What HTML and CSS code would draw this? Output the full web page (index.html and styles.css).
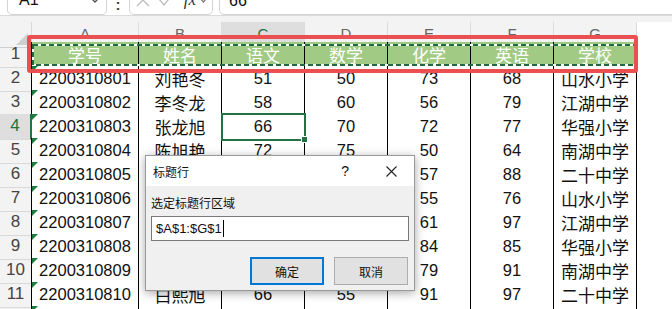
FILE: index.html
```html
<!DOCTYPE html>
<html>
    <head>
        <title>标题行</title>
        <meta charset="utf-8">
        <link rel="stylesheet" href="styles.css">
    </head>
    <body>
        <div class="page">
            <div class="toolbar">
                <div class="namebox">
                    <span>A1</span>
                    <svg width="12" height="8" viewBox="0 0 12 8"><path d="M1 1 L6 6 L11 1" fill="none" stroke="#555" stroke-width="1.4"/></svg>
                </div>
                <div class="colon">:</div>
                <div class="fxbox">
                    <svg width="14" height="14" viewBox="0 0 14 14"><path d="M1 1 L13 13 M13 1 L1 13" stroke="#bbb" stroke-width="1.3"/></svg>
                    <svg width="16" height="14" viewBox="0 0 16 14"><path d="M1 6 L6 12 L15 1" fill="none" stroke="#bbb" stroke-width="1.3"/></svg>
                    <i class="fx">fx</i>
                    <svg width="11" height="8" viewBox="0 0 11 8"><path d="M1 1 L5.5 6 L10 1" fill="none" stroke="#777" stroke-width="1.2"/></svg>
                </div>
                <div class="formula">66</div>
            </div>

            <div class="sheet">
                <div class="row colhead">
                    <div class="corner"><svg width="12" height="12" viewBox="0 0 12 12"><polygon points="12,0 12,12 0,12" fill="#cfcfcf"/></svg></div>
                    <div class="ch">A</div>
                    <div class="ch">B</div>
                    <div class="ch act">C</div>
                    <div class="ch">D</div>
                    <div class="ch">E</div>
                    <div class="ch">F</div>
                    <div class="ch">G</div>
                    <div class="ch blank"></div>
                </div>
                <div class="row r1">
                    <div class="rh">1</div>
                    <div class="cell">学号</div>
                    <div class="cell">姓名</div>
                    <div class="cell">语文</div>
                    <div class="cell">数学</div>
                    <div class="cell">化学</div>
                    <div class="cell">英语</div>
                    <div class="cell">学校</div>
                    <div class="blank"></div>
                </div>
                <div class="row">
                    <div class="rh">2</div>
                    <div class="cell txt">2200310801</div>
                    <div class="cell zh">刘艳冬</div>
                    <div class="cell">51</div>
                    <div class="cell">50</div>
                    <div class="cell">73</div>
                    <div class="cell">68</div>
                    <div class="cell zh">山水小学</div>
                    <div class="blank"></div>
                </div>
                <div class="row">
                    <div class="rh">3</div>
                    <div class="cell txt">2200310802</div>
                    <div class="cell zh">李冬龙</div>
                    <div class="cell">58</div>
                    <div class="cell">60</div>
                    <div class="cell">56</div>
                    <div class="cell">79</div>
                    <div class="cell zh">江湖中学</div>
                    <div class="blank"></div>
                </div>
                <div class="row">
                    <div class="rh act">4</div>
                    <div class="cell txt">2200310803</div>
                    <div class="cell zh">张龙旭</div>
                    <div class="cell sel">66</div>
                    <div class="cell">70</div>
                    <div class="cell">72</div>
                    <div class="cell">77</div>
                    <div class="cell zh">华强小学</div>
                    <div class="blank"></div>
                </div>
                <div class="row">
                    <div class="rh">5</div>
                    <div class="cell txt">2200310804</div>
                    <div class="cell zh">陈旭艳</div>
                    <div class="cell">72</div>
                    <div class="cell">75</div>
                    <div class="cell">50</div>
                    <div class="cell">64</div>
                    <div class="cell zh">南湖中学</div>
                    <div class="blank"></div>
                </div>
                <div class="row">
                    <div class="rh">6</div>
                    <div class="cell txt">2200310805</div>
                    <div class="cell zh">王冬艳</div>
                    <div class="cell">80</div>
                    <div class="cell">66</div>
                    <div class="cell">57</div>
                    <div class="cell">88</div>
                    <div class="cell zh">二十中学</div>
                    <div class="blank"></div>
                </div>
                <div class="row">
                    <div class="rh">7</div>
                    <div class="cell txt">2200310806</div>
                    <div class="cell zh">赵龙冬</div>
                    <div class="cell">63</div>
                    <div class="cell">71</div>
                    <div class="cell">55</div>
                    <div class="cell">76</div>
                    <div class="cell zh">山水小学</div>
                    <div class="blank"></div>
                </div>
                <div class="row">
                    <div class="rh">8</div>
                    <div class="cell txt">2200310807</div>
                    <div class="cell zh">孙旭龙</div>
                    <div class="cell">77</div>
                    <div class="cell">82</div>
                    <div class="cell">61</div>
                    <div class="cell">97</div>
                    <div class="cell zh">江湖中学</div>
                    <div class="blank"></div>
                </div>
                <div class="row">
                    <div class="rh">9</div>
                    <div class="cell txt">2200310808</div>
                    <div class="cell zh">周艳旭</div>
                    <div class="cell">69</div>
                    <div class="cell">58</div>
                    <div class="cell">84</div>
                    <div class="cell">85</div>
                    <div class="cell zh">华强小学</div>
                    <div class="blank"></div>
                </div>
                <div class="row">
                    <div class="rh">10</div>
                    <div class="cell txt">2200310809</div>
                    <div class="cell zh">吴冬旭</div>
                    <div class="cell">74</div>
                    <div class="cell">63</div>
                    <div class="cell">79</div>
                    <div class="cell">91</div>
                    <div class="cell zh">南湖中学</div>
                    <div class="blank"></div>
                </div>
                <div class="row">
                    <div class="rh">11</div>
                    <div class="cell txt">2200310810</div>
                    <div class="cell zh">白熙旭</div>
                    <div class="cell">66</div>
                    <div class="cell">55</div>
                    <div class="cell">91</div>
                    <div class="cell">97</div>
                    <div class="cell zh">二十中学</div>
                    <div class="blank"></div>
                </div>
                <div class="row">
                    <div class="rh">12</div>
                    <div class="cell txt"></div>
                    <div class="cell"></div>
                    <div class="cell"></div>
                    <div class="cell"></div>
                    <div class="cell"></div>
                    <div class="cell"></div>
                    <div class="cell"></div>
                    <div class="blank"></div>
                </div>

                <!-- copy marquee + red highlight over row 1 -->
                <svg class="ants" width="604" height="22" viewBox="0 0 604 22">
                    <rect x="1" y="1" width="602" height="20" fill="none" stroke="#fff" stroke-width="2"/>
                    <rect x="1" y="1" width="602" height="20" fill="none" stroke="#1f6b3d" stroke-width="2" stroke-dasharray="5 3"/>
                </svg>
                <div class="redbox"></div>
            </div>

            <div class="dialog">
                <div class="dtitle">
                    <span>标题行</span>
                    <span class="help">?</span>
                    <svg class="close" width="11" height="11" viewBox="0 0 11 11"><path d="M0.5 0.5 L10.5 10.5 M10.5 0.5 L0.5 10.5" stroke="#222" stroke-width="1.1"/></svg>
                </div>
                <div class="dbody">
                    <div class="dlabel">选定标题行区域</div>
                    <div class="dinput">$A$1:$G$1<span class="caret"></span></div>
                    <div class="dbtns">
                        <button class="btn primary" type="button">确定</button>
                        <button class="btn" type="button">取消</button>
                    </div>
                </div>
            </div>
        </div>
    </body>
</html>
```

FILE: styles.css
```css
body{
    margin: 0;
    background-color: #ffffff;
    font-family: "Liberation Sans", "Noto Sans CJK SC", sans-serif;
    color: #111;
}
.page{
    position: relative;
    width: 672px;
    height: 309px;
    overflow: hidden;
}

/* formula bar, top half is scrolled away */
.toolbar{
    height: 15px;
    border-bottom: 1px solid #dadada;
    display: flex;
    align-items: flex-end;
    overflow: hidden;
    background-color: #ffffff;
}
.namebox{
    box-sizing: border-box;
    width: 100px;
    height: 30px;
    margin-left: 7px;
    padding: 0 5px 0 11px;
    border: 1px solid #d4d4d4;
    border-radius: 5px;
    display: flex;
    align-items: center;
    justify-content: space-between;
    font-size: 16px;
    flex-shrink: 0;
}
.colon{
    width: 22px;
    height: 15px;
    line-height: 10px;
    text-align: center;
    font-size: 15px;
    font-weight: bold;
    color: #444;
    flex-shrink: 0;
}
.fxbox{
    box-sizing: border-box;
    width: 84px;
    height: 30px;
    padding: 0 3px 0 6px;
    border: 1px solid #d4d4d4;
    border-radius: 5px;
    display: flex;
    align-items: center;
    gap: 8px;
    flex-shrink: 0;
}
.fx{
    font-family: "Liberation Serif", serif;
    font-size: 17px;
    color: #333;
    margin-left: 2px;
    margin-right: -6px;
}
.formula{
    box-sizing: border-box;
    height: 30px;
    margin-left: 6px;
    padding-left: 9px;
    width: 470px;
    line-height: 30px;
    border: 1px solid #d4d4d4;
    border-radius: 5px;
    font-size: 16px;
    flex-shrink: 0;
}

/* worksheet */
.sheet{
    position: relative;
    padding-top: 6px;
    background-color: #f3f3f3;
}
.row{
    display: grid;
    grid-template-columns: 32px 107px repeat(6, 83px) 1fr;
    height: 24px;
}
.colhead{
    height: 20px;
}
.corner{
    box-sizing: border-box;
    border-right: 1px solid #d9d9d9;
    border-bottom: 1px solid #cfcfcf;
    display: flex;
    align-items: flex-end;
    justify-content: flex-end;
    padding: 0 3px 2px 0;
}
.ch{
    box-sizing: border-box;
    border-right: 1px solid #dcdcdc;
    border-bottom: 1px solid #cfcfcf;
    color: #666;
    font-size: 15px;
    text-align: center;
    line-height: 24px;
}
.ch.act{
    background-color: #dedede;
    color: #217346;
    border-bottom: 2px solid #217346;
}
.ch.blank{
    border-right: none;
}
.rh{
    box-sizing: border-box;
    border-right: 1px solid #000;
    border-bottom: 1px solid #d9d9d9;
    color: #444;
    font-size: 17px;
    text-align: center;
    line-height: 23px;
}
.rh.act{
    background-color: #dedede;
    color: #217346;
    border-right: 2px solid #217346;
}
.cell{
    position: relative;
    box-sizing: border-box;
    border-right: 1px solid #000;
    border-bottom: 1px solid #000;
    background-color: #ffffff;
    display: flex;
    align-items: center;
    justify-content: center;
    font-size: 16.5px;
    color: #111;
}
.blank{
    background-color: #ffffff;
}
.zh{
    font-size: 17px;
}
.r1 .cell{
    background-color: #a1cb84;
    color: #ffffff;
    font-size: 17px;
}
.txt::before{
    content: "";
    position: absolute;
    left: 0;
    top: 0;
    border-top: 6px solid #1e7b3e;
    border-right: 6px solid transparent;
}
.sel{
    outline: 2px solid #217346;
    outline-offset: -1px;
    z-index: 1;
}
.sel::after{
    content: "";
    position: absolute;
    right: -4px;
    bottom: -4px;
    width: 5px;
    height: 5px;
    background-color: #217346;
    border: 1px solid #fff;
}
.ants{
    position: absolute;
    left: 32px;
    top: 28px;
}
.redbox{
    position: absolute;
    left: 27px;
    top: 19px;
    width: 611px;
    height: 38px;
    box-sizing: border-box;
    border: 4px solid #ea4f51;
    border-radius: 3px;
}

/* dialog */
.dialog{
    position: absolute;
    left: 145px;
    top: 155px;
    width: 270px;
    height: 136px;
    box-sizing: border-box;
    border: 1px solid #9a9a9a;
    background-color: #f0f0f0;
    box-shadow: 0 2px 9px rgba(0, 0, 0, 0.35);
    font-family: "Noto Sans CJK SC", sans-serif;
    font-size: 12px;
    color: #111;
}
.dtitle{
    height: 30px;
    background-color: #ffffff;
    display: flex;
    align-items: center;
    padding-left: 7px;
}
.help{
    margin-left: auto;
    font-family: "Liberation Sans", sans-serif;
    font-size: 14px;
}
.close{
    margin: 0 17px 0 37px;
}
.dbody{
    padding: 9px 5px 0 5px;
}
.dlabel{
    line-height: 16px;
}
.dinput{
    box-sizing: border-box;
    margin-top: 5px;
    height: 25px;
    width: 258px;
    border: 1px solid #7a7a7a;
    background-color: #ffffff;
    padding-left: 4px;
    display: flex;
    align-items: center;
    font-family: "Liberation Sans", sans-serif;
    font-size: 13px;
}
.caret{
    display: inline-block;
    width: 1px;
    height: 17px;
    margin-left: 1px;
    background-color: #000;
}
.dbtns{
    margin-top: 16px;
    display: flex;
    justify-content: flex-end;
    gap: 10px;
    padding-right: 1px;
}
.btn{
    box-sizing: border-box;
    width: 74px;
    height: 28px;
    background-color: #e1e1e1;
    border: 1px solid #adadad;
    font-family: "Noto Sans CJK SC", sans-serif;
    font-size: 12px;
    color: #111;
    padding: 0;
}
.btn.primary{
    border: 2px solid #0078d7;
}
```
